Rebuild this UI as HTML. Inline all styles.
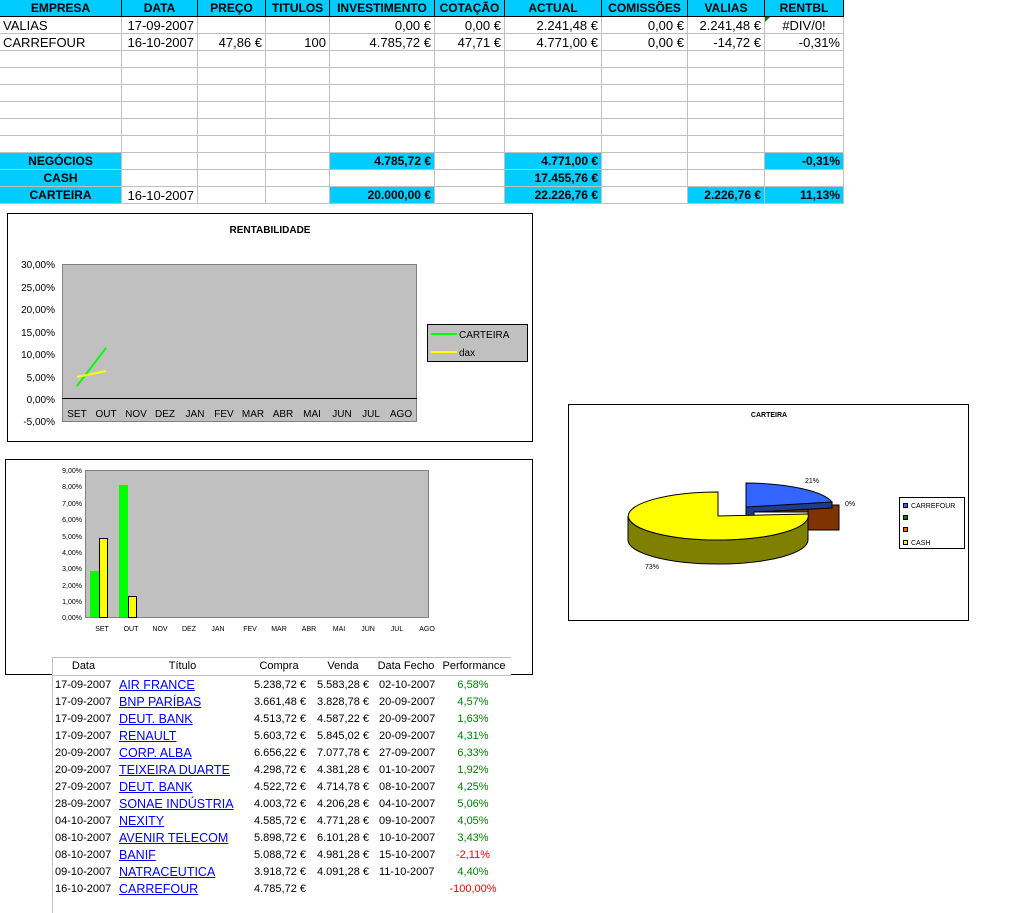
<!DOCTYPE html>
<html><head><meta charset="utf-8"><style>
*{margin:0;padding:0;box-sizing:border-box}
body{width:1012px;height:913px;background:#fff;position:relative;overflow:hidden;font-family:"Liberation Sans",Arial,sans-serif;font-size:13px;color:#000}
.c{position:absolute;height:17px;line-height:17px;white-space:nowrap;overflow:hidden;border-right:1px solid #c0c0c0;border-bottom:1px solid #c0c0c0;padding:0 3px}
.h{background:#00ccff;font-weight:bold;text-align:center;border-color:#000;font-size:12px}
.b{background:#00ccff;font-weight:bold;font-size:12px}
.r{text-align:right}.ct{text-align:center}
.t{position:absolute;font-size:11px;white-space:nowrap;line-height:17px}
a{color:#0000ff;text-decoration:underline}
svg{position:absolute;left:0;top:0}
</style></head><body>
<div id="grid"></div>
<div style="position:absolute;left:765px;top:17px;width:0;height:0;border-top:5px solid #008000;border-right:5px solid transparent"></div>
<svg width="1012" height="913" font-family="Liberation Sans,Arial,sans-serif">
<rect x="7.5" y="213.5" width="525" height="228" fill="#fff" stroke="#000"/>
<text x="270" y="233" font-size="10" font-weight="bold" text-anchor="middle">RENTABILIDADE</text>
<rect x="62.5" y="264.5" width="354" height="157" fill="#c0c0c0" stroke="#808080"/>
<g font-size="10" text-anchor="end">
<text x="55" y="268">30,00%</text><text x="55" y="291">25,00%</text><text x="55" y="313">20,00%</text><text x="55" y="336">15,00%</text><text x="55" y="358">10,00%</text><text x="55" y="381">5,00%</text><text x="55" y="403">0,00%</text><text x="55" y="425">-5,00%</text></g>
<line x1="62" y1="398.5" x2="417" y2="398.5" stroke="#000"/>
<g font-size="10" text-anchor="middle"><text x="77" y="417">SET</text><text x="106" y="417">OUT</text><text x="136" y="417">NOV</text><text x="165" y="417">DEZ</text><text x="195" y="417">JAN</text><text x="224" y="417">FEV</text><text x="253" y="417">MAR</text><text x="283" y="417">ABR</text><text x="312" y="417">MAI</text><text x="342" y="417">JUN</text><text x="371" y="417">JUL</text><text x="401" y="417">AGO</text></g>
<line x1="77" y1="386" x2="106" y2="348" stroke="#00ff00" stroke-width="2"/>
<line x1="77" y1="377" x2="106" y2="371" stroke="#ffff00" stroke-width="2"/>
<rect x="427.5" y="324.5" width="100" height="37" fill="#c0c0c0" stroke="#000"/>
<line x1="431" y1="334" x2="457" y2="334" stroke="#00ff00" stroke-width="2"/><text x="459" y="338" font-size="10">CARTEIRA</text>
<line x1="431" y1="352" x2="457" y2="352" stroke="#ffff00" stroke-width="2"/><text x="459" y="356" font-size="10">dax</text>
<rect x="5.5" y="459.5" width="527" height="215" fill="#fff" stroke="#000"/>
<rect x="85.5" y="470.5" width="343" height="147" fill="#c0c0c0" stroke="#808080"/>
<g font-size="7" text-anchor="end"><text x="82" y="473">9,00%</text><text x="82" y="489">8,00%</text><text x="82" y="506">7,00%</text><text x="82" y="522">6,00%</text><text x="82" y="539">5,00%</text><text x="82" y="555">4,00%</text><text x="82" y="571">3,00%</text><text x="82" y="588">2,00%</text><text x="82" y="604">1,00%</text><text x="82" y="620">0,00%</text></g>
<rect x="90" y="571" width="9" height="46" fill="#00ff00"/>
<rect x="99.5" y="538.5" width="8" height="79" fill="#ffff00" stroke="#000"/>
<rect x="119" y="485" width="9" height="132" fill="#00ff00"/>
<rect x="128.5" y="596.5" width="8" height="21" fill="#ffff00" stroke="#000"/>
<g font-size="7" text-anchor="middle"><text x="102" y="631">SET</text><text x="131" y="631">OUT</text><text x="160" y="631">NOV</text><text x="189" y="631">DEZ</text><text x="218" y="631">JAN</text><text x="250" y="631">FEV</text><text x="279" y="631">MAR</text><text x="309" y="631">ABR</text><text x="339" y="631">MAI</text><text x="368" y="631">JUN</text><text x="397" y="631">JUL</text><text x="427" y="631">AGO</text></g>
<rect x="568.5" y="404.5" width="400" height="216" fill="#fff" stroke="#000"/>
<text x="769" y="417" font-size="7" font-weight="bold" text-anchor="middle">CARTEIRA</text>
<path d="M808,505 L839,505 L839,530 L808,530 Z" fill="#803300" stroke="#000"/>
<path d="M754,512 L808,506 L808,512 Z" fill="#803300" stroke="#000"/>
<path d="M746,502 L832,502 L832,508 L754,512 L754,516 L746,516 Z" fill="#1f3c8c" stroke="#000"/>
<path d="M746,507 L746,483 A90,24 0 0 1 832,502 Z" fill="#3366ff" stroke="#000"/>
<path d="M628,516 L628,540 A90,24 0 0 0 808,540 L808,516 A90,24 0 0 1 628,516 Z" fill="#808000" stroke="#000"/>
<path d="M718,516 L718,492 A90,24 0 1 0 808,514 Z" fill="#ffff00" stroke="#000"/>
<text x="805" y="483" font-size="7">21%</text><text x="845" y="506" font-size="7">0%</text><text x="645" y="569" font-size="7">73%</text>
<rect x="899.5" y="497.5" width="65" height="51" fill="#fff" stroke="#000"/>
<rect x="903.5" y="503.5" width="4" height="4" fill="#3366ff" stroke="#000"/><text x="911" y="508" font-size="7">CARREFOUR</text>
<rect x="903.5" y="515.5" width="4" height="4" fill="#008000" stroke="#000"/>
<rect x="903.5" y="527.5" width="4" height="4" fill="#ff6600" stroke="#000"/>
<rect x="903.5" y="540.5" width="4" height="4" fill="#ffff00" stroke="#000"/><text x="911" y="545" font-size="7">CASH</text>
<rect x="52" y="657" width="459" height="256" fill="#fff"/>
<line x1="52" y1="657.5" x2="511" y2="657.5" stroke="#c0c0c0"/>
<line x1="52.5" y1="657" x2="52.5" y2="913" stroke="#c0c0c0"/>
<line x1="52" y1="675.5" x2="511" y2="675.5" stroke="#c0c0c0"/>
</svg>
<div id="bt"></div>
<script>
var X=[0,122,198,266,330,435,505,602,688,765,844];
var H=["EMPRESA","DATA","PREÇO","TITULOS","INVESTIMENTO","COTAÇÃO","ACTUAL","COMISSÕES","VALIAS","RENTBL"];
var R=[
[["VALIAS",""],["17-09-2007","r"],["",""],["",""],["0,00 €","r"],["0,00 €","r"],["2.241,48 €","r"],["0,00 €","r"],["2.241,48 €","r"],["#DIV/0!","ct"]],
[["CARREFOUR",""],["16-10-2007","r"],["47,86 €","r"],["100","r"],["4.785,72 €","r"],["47,71 €","r"],["4.771,00 €","r"],["0,00 €","r"],["-14,72 €","r"],["-0,31%","r"]]];
for(var i=0;i<6;i++)R.push([["",""],["",""],["",""],["",""],["",""],["",""],["",""],["",""],["",""],["",""]]);
R.push([["NEGÓCIOS","b ct"],["",""],["",""],["",""],["4.785,72 €","b r"],["",""],["4.771,00 €","b r"],["",""],["",""],["-0,31%","b r"]]);
R.push([["CASH","b ct"],["",""],["",""],["",""],["",""],["",""],["17.455,76 €","b r"],["",""],["",""],["",""]]);
R.push([["CARTEIRA","b ct"],["16-10-2007","r"],["",""],["",""],["20.000,00 €","b r"],["",""],["22.226,76 €","b r"],["",""],["2.226,76 €","b r"],["11,13%","b r"]]);
var s="";
for(var j=0;j<10;j++)s+='<div class="c h" style="left:'+X[j]+'px;top:0;width:'+(X[j+1]-X[j])+'px">'+H[j]+'</div>';
for(var r=0;r<R.length;r++)for(j=0;j<10;j++){var c=R[r][j];s+='<div class="c '+c[1]+'" style="left:'+X[j]+'px;top:'+(17+r*17)+'px;width:'+(X[j+1]-X[j])+'px">'+c[0]+'</div>';}
document.getElementById('grid').innerHTML=s;
var B=[["17-09-2007","AIR FRANCE","5.238,72 €","5.583,28 €","02-10-2007","6,58%"],["17-09-2007","BNP PARÍBAS","3.661,48 €","3.828,78 €","20-09-2007","4,57%"],["17-09-2007","DEUT. BANK","4.513,72 €","4.587,22 €","20-09-2007","1,63%"],["17-09-2007","RENAULT","5.603,72 €","5.845,02 €","20-09-2007","4,31%"],["20-09-2007","CORP. ALBA","6.656,22 €","7.077,78 €","27-09-2007","6,33%"],["20-09-2007","TEIXEIRA DUARTE","4.298,72 €","4.381,28 €","01-10-2007","1,92%"],["27-09-2007","DEUT. BANK","4.522,72 €","4.714,78 €","08-10-2007","4,25%"],["28-09-2007","SONAE INDÚSTRIA","4.003,72 €","4.206,28 €","04-10-2007","5,06%"],["04-10-2007","NEXITY","4.585,72 €","4.771,28 €","09-10-2007","4,05%"],["08-10-2007","AVENIR TELECOM","5.898,72 €","6.101,28 €","10-10-2007","3,43%"],["08-10-2007","BANIF","5.088,72 €","4.981,28 €","15-10-2007","-2,11%"],["09-10-2007","NATRACEUTICA","3.918,72 €","4.091,28 €","11-10-2007","4,40%"],["16-10-2007","CARREFOUR","4.785,72 €","","","-100,00%"]];
var t='<div class="t" style="left:55px;top:658px;width:57px;text-align:center">Data</div><div class="t" style="left:119px;top:658px;width:127px;text-align:center">Título</div><div class="t" style="left:254px;top:658px;width:50px;text-align:center">Compra</div><div class="t" style="left:318px;top:658px;width:50px;text-align:center">Venda</div><div class="t" style="left:376px;top:658px;width:60px;text-align:center">Data Fecho</div><div class="t" style="left:439px;top:658px;width:70px;text-align:center">Performance</div>';
for(var k=0;k<B.length;k++){var y=677+k*17,b=B[k];var col=b[5].charAt(0)=='-'?'#ff0000':'#008000';
t+='<div class="t" style="left:55px;top:'+y+'px">'+b[0]+'</div><div class="t" style="left:119px;top:'+y+'px;font-size:12.5px"><a>'+b[1]+'</a></div><div class="t" style="left:240px;top:'+y+'px;width:66px;text-align:right">'+b[2]+'</div><div class="t" style="left:303px;top:'+y+'px;width:66px;text-align:right">'+b[3]+'</div><div class="t" style="left:379px;top:'+y+'px">'+b[4]+'</div><div class="t" style="left:437px;top:'+y+'px;width:72px;text-align:center;color:'+col+'">'+b[5]+'</div>';}
document.getElementById('bt').innerHTML=t;
</script>
</body></html>
